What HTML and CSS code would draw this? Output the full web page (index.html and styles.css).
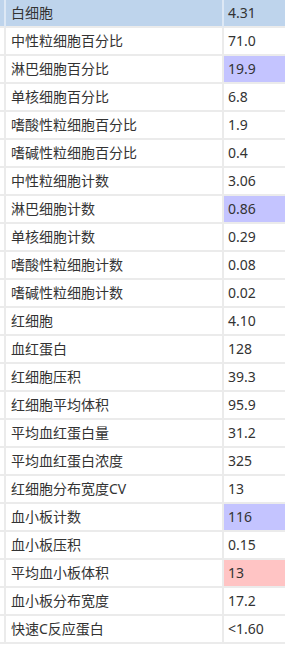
FILE: index.html
```html
<!DOCTYPE html>
<html lang="zh-CN">
<head>
<meta charset="utf-8">
<title>血常规</title>
<link rel="stylesheet" href="styles.css">
</head>
<body>
<div class="wrap">
<table class="results">
<colgroup><col class="c-gap"><col class="c-name"><col class="c-val"></colgroup>
<tbody>
<tr class="head"><td></td><td>白细胞</td><td>4.31</td></tr>
<tr><td></td><td>中性粒细胞百分比</td><td>71.0</td></tr>
<tr><td></td><td>淋巴细胞百分比</td><td class="low">19.9</td></tr>
<tr><td></td><td>单核细胞百分比</td><td>6.8</td></tr>
<tr><td></td><td>嗜酸性粒细胞百分比</td><td>1.9</td></tr>
<tr><td></td><td>嗜碱性粒细胞百分比</td><td>0.4</td></tr>
<tr><td></td><td>中性粒细胞计数</td><td>3.06</td></tr>
<tr><td></td><td>淋巴细胞计数</td><td class="low">0.86</td></tr>
<tr><td></td><td>单核细胞计数</td><td>0.29</td></tr>
<tr><td></td><td>嗜酸性粒细胞计数</td><td>0.08</td></tr>
<tr><td></td><td>嗜碱性粒细胞计数</td><td>0.02</td></tr>
<tr><td></td><td>红细胞</td><td>4.10</td></tr>
<tr><td></td><td>血红蛋白</td><td>128</td></tr>
<tr><td></td><td>红细胞压积</td><td>39.3</td></tr>
<tr><td></td><td>红细胞平均体积</td><td>95.9</td></tr>
<tr><td></td><td>平均血红蛋白量</td><td>31.2</td></tr>
<tr><td></td><td>平均血红蛋白浓度</td><td>325</td></tr>
<tr><td></td><td>红细胞分布宽度CV</td><td>13</td></tr>
<tr><td></td><td>血小板计数</td><td class="low">116</td></tr>
<tr><td></td><td>血小板压积</td><td>0.15</td></tr>
<tr><td></td><td>平均血小板体积</td><td class="high">13</td></tr>
<tr><td></td><td>血小板分布宽度</td><td>17.2</td></tr>
<tr><td></td><td>快速C反应蛋白</td><td>&lt;1.60</td></tr>
</tbody>
</table>
</div>
</body>
</html>
```

FILE: styles.css
```css
html, body {
  margin: 0;
  padding: 0;
  background: #ffffff;
  overflow: hidden;
}
.wrap {
  width: 285px;
  overflow: hidden;
}
.results {
  border-collapse: separate;
  border-spacing: 0;
  width: 300px;
  table-layout: fixed;
  font-family: "Microsoft YaHei", "Noto Sans", "Noto Sans CJK SC", sans-serif;
  font-size: 14px;
  color: #333333;
}
.c-gap { width: 6px; }
.c-name { width: 218px; }
.c-val { width: 76px; }
.results td {
  height: 26px;
  padding: 0;
  border-bottom: 2px solid #ebebeb;
  vertical-align: middle;
  white-space: nowrap;
  line-height: 26px;
}
.results td:nth-child(1) {
  border-right: 2px solid #ebebeb;
}
.results td:nth-child(2) {
  border-right: 2px solid #ebebeb;
  padding-left: 5px;
}
.results td:nth-child(3) {
  padding-left: 4px;
}
.results tr.head td {
  background: #bed4ec;
}
.results tr.head td:nth-child(1),
.results tr.head td:nth-child(2) {
  border-right-color: #dde8f5;
}
.results td.low {
  background: #c4c4ff;
}
.results td.high {
  background: #ffc4c4;
}
```
